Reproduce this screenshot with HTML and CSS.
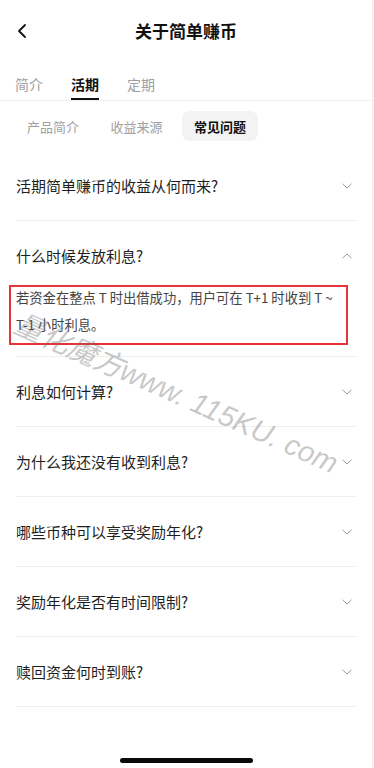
FILE: index.html
```html
<!DOCTYPE html>
<html lang="zh-CN">
<head>
<meta charset="utf-8">
<title>关于简单赚币</title>
<link rel="stylesheet" href="styles.css">
</head>
<body>
<div class="page">
  <header class="header">
    <span class="back">
      <svg width="12" height="16" viewBox="0 0 12 16"><path d="M9 2 L3 8 L9 14" fill="none" stroke="#111" stroke-width="1.8" stroke-linecap="round" stroke-linejoin="round"/></svg>
    </span>
    <h1 class="title">关于简单赚币</h1>
  </header>

  <nav class="tabs">
    <span class="tab">简介</span>
    <span class="tab active">活期</span>
    <span class="tab">定期</span>
  </nav>

  <div class="subtabs">
    <span class="subtab">产品简介</span>
    <span class="subtab">收益来源</span>
    <span class="subtab active">常见问题</span>
  </div>

  <ul class="faq">
    <li class="item">
      <div class="q"><span>活期简单赚币的收益从何而来?</span><svg class="chev" width="10" height="6" viewBox="0 0 10 6"><path d="M0.5 0.8 L5 5 L9.5 0.8" fill="none" stroke="#9a9a9a" stroke-width="1"/></svg></div>
    </li>
    <li class="item open">
      <div class="q"><span>什么时候发放利息?</span><svg class="chev" width="10" height="6" viewBox="0 0 10 6"><path d="M0.5 5.2 L5 1 L9.5 5.2" fill="none" stroke="#9a9a9a" stroke-width="1"/></svg></div>
      <p class="a">若资金在整点 T 时出借成功，用户可在 T+1 时收到 T ~<br><span class="nw">T-1</span> 小时利息。</p>
    </li>
    <li class="item">
      <div class="q"><span>利息如何计算?</span><svg class="chev" width="10" height="6" viewBox="0 0 10 6"><path d="M0.5 0.8 L5 5 L9.5 0.8" fill="none" stroke="#9a9a9a" stroke-width="1"/></svg></div>
    </li>
    <li class="item">
      <div class="q"><span>为什么我还没有收到利息?</span><svg class="chev" width="10" height="6" viewBox="0 0 10 6"><path d="M0.5 0.8 L5 5 L9.5 0.8" fill="none" stroke="#9a9a9a" stroke-width="1"/></svg></div>
    </li>
    <li class="item">
      <div class="q"><span>哪些币种可以享受奖励年化?</span><svg class="chev" width="10" height="6" viewBox="0 0 10 6"><path d="M0.5 0.8 L5 5 L9.5 0.8" fill="none" stroke="#9a9a9a" stroke-width="1"/></svg></div>
    </li>
    <li class="item">
      <div class="q"><span>奖励年化是否有时间限制?</span><svg class="chev" width="10" height="6" viewBox="0 0 10 6"><path d="M0.5 0.8 L5 5 L9.5 0.8" fill="none" stroke="#9a9a9a" stroke-width="1"/></svg></div>
    </li>
    <li class="item">
      <div class="q"><span>赎回资金何时到账?</span><svg class="chev" width="10" height="6" viewBox="0 0 10 6"><path d="M0.5 0.8 L5 5 L9.5 0.8" fill="none" stroke="#9a9a9a" stroke-width="1"/></svg></div>
    </li>
  </ul>

  <div class="home-bar"></div>

  <div class="watermark">量化魔方www. 115KU. com</div>
</div>
</body>
</html>
```

FILE: styles.css
```css
* { box-sizing: border-box; }
html, body { margin: 0; padding: 0; background: #fff; }
body {
  font-family: "Noto Sans CJK SC", "Noto Sans", sans-serif;
  color: #1f1f1f;
}
.page {
  position: relative;
  width: 374px;
  height: 768px;
  overflow: hidden;
  border-right: 2px solid #f2f2f2;
  display: flex;
  flex-direction: column;
}
.header {
  position: relative;
  height: 62px;
  display: flex;
  align-items: center;
  justify-content: center;
}
.back {
  position: absolute;
  left: 16px;
  top: 23px;
  display: flex;
}
.title {
  margin: 0;
  font-size: 17px;
  font-weight: 700;
  line-height: 24px;
  color: #111;
}
.tabs {
  display: flex;
  gap: 28px;
  padding: 0 15px;
  border-bottom: 1px solid #f0f0f0;
}
.tab {
  font-size: 14px;
  line-height: 20px;
  padding-top: 12px;
  padding-bottom: 4px;
  border-bottom: 2px solid transparent;
  color: #a0a0a0;
}
.tab.active {
  color: #111;
  font-weight: 700;
  border-bottom-color: #111;
}
.subtabs {
  display: flex;
  gap: 7.5px;
  padding: 0 15px;
  margin-top: 10px;
}
.subtab {
  height: 30px;
  padding: 0 12px;
  border-radius: 8px;
  font-size: 13px;
  display: flex;
  align-items: center;
  color: #a0a0a0;
}
.subtab.active {
  background: #f3f3f3;
  color: #111;
  font-weight: 700;
}
.faq {
  list-style: none;
  margin: 10px 0 0;
  padding: 0 16px;
}
.item {
  border-bottom: 1px solid #efefef;
}
.q {
  display: flex;
  align-items: center;
  justify-content: space-between;
  padding: 24px 4px 23px 0;
  font-size: 15px;
  line-height: 22px;
  color: #1f1f1f;
}
.item.open .q {
  padding-bottom: 17px;
}
.chev { display: block; }
.a {
  position: relative;
  margin: 0;
  padding-bottom: 18px;
  font-size: 13.3px;
  line-height: 27px;
  color: #444;
}
.nw { white-space: nowrap; }
.a::after {
  content: "";
  position: absolute;
  left: -7px;
  right: 8px;
  top: 1px;
  height: 56px;
  border: 2px solid #e8333a;
}
.home-bar {
  position: absolute;
  left: 120px;
  top: 758px;
  width: 133px;
  height: 5px;
  border-radius: 3px;
  background: #0a0a0a;
}
.watermark {
  position: absolute;
  left: 16px;
  top: 305px;
  transform-origin: left center;
  transform: rotate(24deg);
  white-space: nowrap;
  font-family: "Liberation Sans", "Noto Sans CJK SC", sans-serif;
  font-style: italic;
  font-size: 29px;
  line-height: 34px;
  color: rgba(110, 110, 110, 0.38);
  pointer-events: none;
}
```
